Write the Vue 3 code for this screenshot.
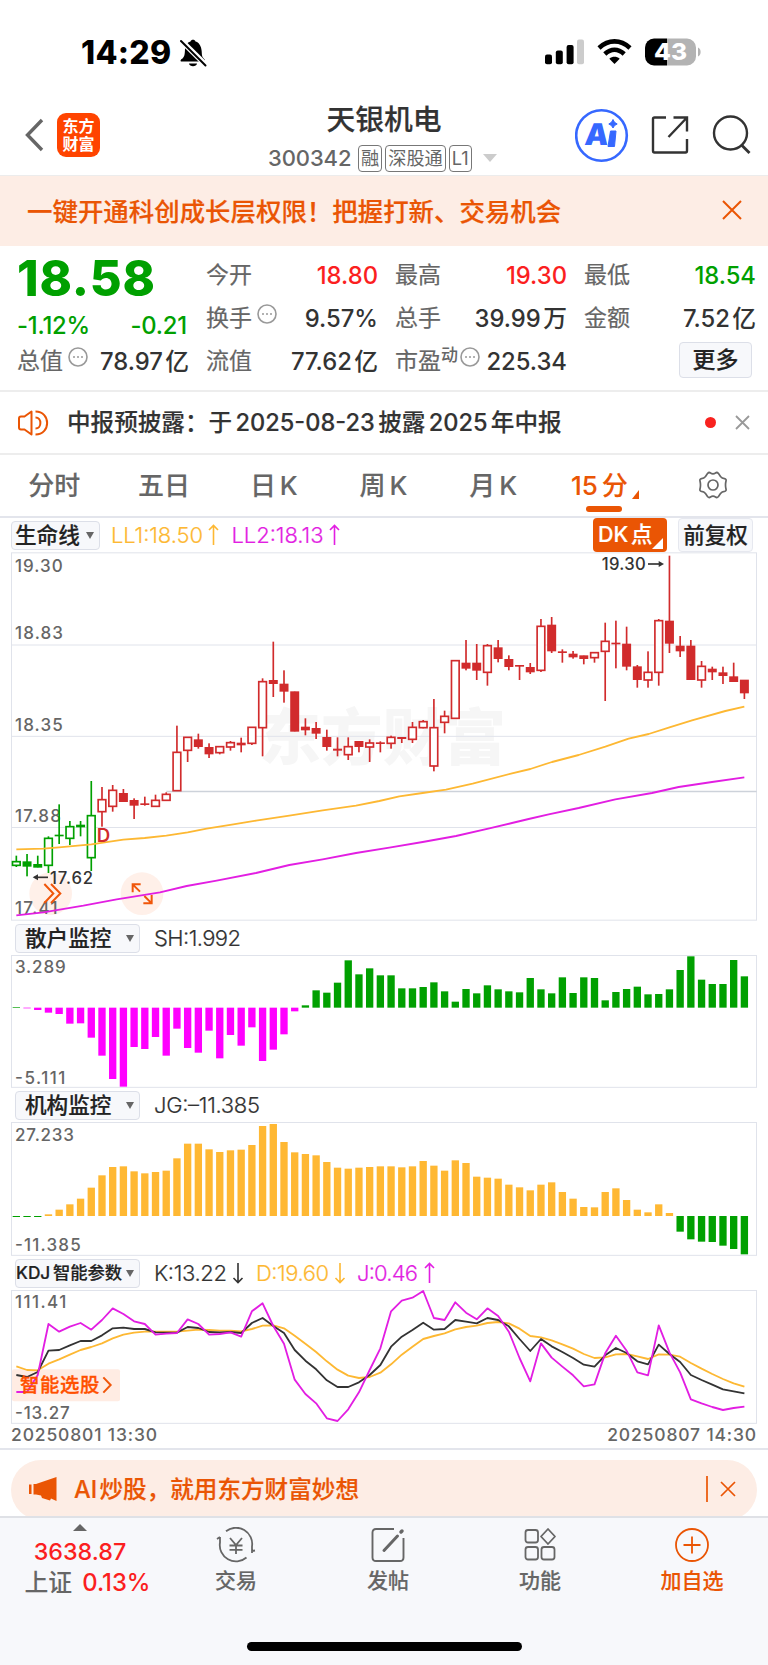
<script setup>
import { ref } from 'vue'

const STEP = 32.12
const x = (i) => 49 + i * STEP

const tabs = ref([
  { name: '分时' },
  { name: '五日' },
  { name: '日 K' },
  { name: '周 K' },
  { name: '月 K' },
  { name: '15 分', active: true }
])

const stats = [
  [
    { label: '今开', value: '18.80', cls: 'up' },
    { label: '换手', tip: true, value: '9.57%' },
    { label: '流值', value: '77.62 亿' }
  ],
  [
    { label: '最高', value: '19.30', cls: 'up' },
    { label: '总手', value: '39.99 万' },
    { label: '市盈', sup: '动', tip: true, value: '225.34' }
  ],
  [
    { label: '最低', value: '18.54', cls: 'down' },
    { label: '金额', value: '7.52 亿' }
  ]
]

// high, body top, body bottom, low, hollow
const candles = [
  [1022, 1040, 1051, 1056, 1], [1017, 1040, 1054, 1084, 0], [1022, 1048, 1057, 1057, 0], [964, 970, 1051, 1074, 1],
  [868, 960, 963, 987, 0], [918, 935, 970, 990, 1], [918, 930, 936, 964, 0], [798, 902, 1028, 1068, 1],
  [816, 854, 890, 935, 1], [810, 826, 874, 890, 1], [822, 835, 860, 860, 0], [850, 856, 871, 912, 0],
  [845, 866, 869, 872, 0], [839, 856, 874, 874, 1], [832, 838, 856, 858, 1], [632, 712, 827, 828, 1],
  [667, 667, 706, 741, 1], [656, 674, 695, 701, 0], [685, 697, 717, 729, 0], [695, 695, 713, 718, 1],
  [678, 683, 696, 707, 1], [668, 684, 690, 712, 0], [637, 637, 685, 690, 1], [490, 500, 638, 724, 1],
  [380, 496, 506, 546, 0], [466, 507, 529, 563, 0], [530, 530, 649, 649, 0], [610, 636, 645, 661, 0],
  [621, 640, 655, 672, 0], [644, 667, 695, 707, 0], [667, 702, 706, 724, 0], [667, 695, 719, 735, 1],
  [678, 679, 695, 712, 0], [673, 684, 696, 741, 1], [679, 683, 686, 712, 0], [662, 667, 685, 701, 1],
  [667, 667, 671, 684, 0], [621, 637, 673, 684, 1], [615, 620, 638, 640, 1], [552, 638, 753, 769, 1],
  [587, 604, 622, 655, 1], [437, 437, 610, 610, 1], [375, 444, 460, 466, 0], [387, 444, 466, 495, 0],
  [387, 392, 472, 512, 1], [375, 398, 431, 442, 0], [421, 433, 455, 466, 0], [451, 451, 454, 495, 0],
  [444, 457, 471, 477, 0], [312, 334, 466, 471, 1], [306, 330, 408, 414, 0], [403, 410, 413, 443, 0],
  [408, 417, 426, 431, 0], [422, 422, 431, 448, 0], [413, 413, 428, 443, 1], [323, 379, 409, 558, 1],
  [317, 384, 387, 460, 0], [335, 387, 454, 466, 0], [450, 455, 494, 518, 0], [409, 472, 495, 518, 1],
  [312, 317, 472, 512, 1], [122, 318, 385, 414, 0], [363, 393, 408, 426, 0], [375, 393, 494, 494, 0],
  [438, 454, 495, 518, 1], [455, 462, 471, 495, 0], [455, 473, 482, 507, 0], [443, 485, 500, 500, 0],
  [495, 495, 534, 552, 0]
]

const ll1 = '49,1003 130,1001 177,997 274,988 370,974 434,969 499,962 563,952 620,941 700,928 768,917 868,902 968,886 1068,872 1138,858 1198,844 1268,834 1338,824 1418,806 1536,775 1591,762 1656,741 1736,720 1816,695 1886,671 1946,657 2006,638 2076,616 2176,588 2233,575'
const ll2 = '49,1201 130,1192 250,1172 350,1153 480,1132 560,1113 650,1097 768,1074 868,1050 968,1033 1068,1014 1168,998 1268,981 1368,963 1468,940 1536,924 1586,912 1646,898 1736,879 1846,853 1956,834 2036,816 2136,801 2233,787'

const retailZero = 263
const retail = [
  261, 265, 270, 278, 282, 311, 310, 353, 407, 477, 500, 381, 387, 351, 407, 326, 384, 398, 332, 415, 345, 377, 322,
  423, 389, 343, 274, 256, 211, 218, 188, 121, 163, 145, 166, 166, 205, 205, 201, 187, 214, 245, 207, 220, 196, 208,
  214, 217, 174, 208, 220, 172, 219, 172, 174, 241, 216, 207, 200, 223, 222, 208, 150, 109, 179, 192, 192, 120, 169
]

const instZero = 888
const inst = [
  891, 891, 891, 883, 869, 853, 836, 803, 766, 741, 739, 754, 760, 756, 752, 715, 671, 671, 688, 696, 691, 689, 675,
  618, 612, 666, 697, 702, 706, 726, 743, 746, 743, 741, 739, 739, 742, 739, 723, 737, 752, 721, 729, 770, 773, 776,
  794, 802, 811, 794, 787, 816, 836, 861, 862, 816, 805, 840, 869, 877, 853, 879, 935, 958, 965, 966, 977, 987, 1003
]

const k = [
  375, 381, 366, 302, 300, 286, 273, 273, 256, 235, 233, 237, 237, 247, 248, 248, 231, 234, 246, 247, 246, 249, 219,
  204, 228, 249, 300, 332, 358, 391, 411, 411, 397, 375, 345, 290, 260, 240, 218, 239, 237, 210, 215, 220, 204, 210,
  229, 267, 303, 267, 289, 306, 324, 344, 350, 316, 294, 309, 334, 343, 284, 312, 336, 375, 390, 404, 418, 424, 430
]
const d = [
  349, 360, 361, 341, 328, 314, 300, 291, 280, 265, 254, 248, 245, 245, 245, 245, 242, 239, 240, 242, 242, 244, 237,
  227, 226, 235, 257, 281, 306, 334, 359, 377, 384, 381, 368, 343, 314, 290, 267, 258, 250, 238, 231, 227, 219, 216,
  220, 236, 258, 262, 271, 283, 296, 312, 324, 322, 313, 312, 319, 327, 313, 314, 320, 339, 356, 372, 387, 400, 410
]
const j = [
  426, 426, 375, 222, 245, 230, 219, 239, 210, 175, 192, 214, 222, 254, 251, 249, 208, 222, 254, 252, 247, 260, 184,
  160, 228, 281, 389, 432, 460, 505, 513, 478, 427, 360, 295, 184, 152, 143, 123, 204, 210, 157, 188, 208, 175, 198,
  245, 324, 394, 280, 323, 350, 376, 409, 403, 310, 257, 302, 367, 376, 226, 307, 367, 448, 460, 471, 480, 474, 470
]
const line = (arr) => arr.map((v, i) => `${x(i).toFixed(1)},${v}`).join(' ')
</script>

<template>
  <main class="app">
    <div class="status">
      <span class="time">14:29</span>
      <svg class="bell" width="28" height="30" viewBox="0 0 28 30">
        <path d="M3.5 20.5C1.5 21.5 1 23 2 23.5H25.5C26.5 23 26 21.5 24.5 20.3C22 17.5 23.5 15 22 9.500C21 6 18.500 3.800 16.500 3.500C16 1 12 1 11.500 3.500C8 4.500 6.200 7.500 6 11C5.800 15 6 18 3.500 20.500Z" />
        <path d="M10 25.500H18C17.500 29 10.500 29 10 25.500Z" />
        <path d="M1 1.500L27 27" stroke="#fff" stroke-width="5.500" />
        <path d="M2 3L26.500 27.500" stroke="#000" stroke-width="2" stroke-linecap="round" />
      </svg>
      <svg class="signal" width="160" height="30" viewBox="0 0 160 30">
        <rect x="0" y="16.500" width="7" height="9.800" rx="2" />
        <rect x="10.800" y="12.500" width="7" height="13.800" rx="2" />
        <rect x="21.600" y="7" width="7" height="19.300" rx="2" />
        <rect x="32" y="1.500" width="7" height="24.800" rx="2" fill="#ccc" />
        <g fill="none" stroke="#000" stroke-width="4.600">
          <path d="M54 10C63.500 1.200 75.500 1.200 85 10" />
          <path d="M59.800 16C66 10.300 73 10.300 79.200 16" />
        </g>
        <path d="M69.500 26L64.300 20.800C67.500 18.200 71.500 18.200 74.700 20.800Z" />
        <path d="M109 .5H122V27.500H109A9 9 0 0 1 100 18.500V9.500A9 9 0 0 1 109 .5Z" />
        <path d="M122 .5H142A9 9 0 0 1 151 9.500V18.500A9 9 0 0 1 142 27.500H122Z" fill="#b3b3b3" />
        <path d="M153 9.500C156.500 11 156.500 17 153 18.500Z" fill="#b3b3b3" />
        <text x="109" y="22.300" class="battery" textLength="33" lengthAdjust="spacingAndGlyphs">43</text>
      </svg>
    </div>

    <header class="header">
      <div class="left">
        <svg width="20" height="34" viewBox="0 0 20 34"><path d="M17 2L2.500 17L17 32" fill="none" stroke="#666" stroke-width="3.400" /></svg>
        <div class="logo"><span>东方</span><span>财富</span></div>
      </div>
      <div class="name">
        <h1>天银机电</h1>
        <p>
          <span class="code">300342</span><i>融</i><i>深股通</i><i>L1</i>
          <svg width="14" height="8" viewBox="0 0 14 8"><path d="M0 0H14L7 8Z" fill="#ccc" /></svg>
        </p>
      </div>
      <svg class="tools" width="178" height="56" viewBox="0 0 178 56">
        <circle cx="26.500" cy="28.500" r="25.300" fill="#fff" stroke="#3668ff" stroke-width="2.600" />
        <g fill="#3668ff">
          <text transform="translate(9 38) skewX(-5)" class="ai">A</text>
          <path d="M35.500 24H41L39.500 39.500H33Z" stroke="#3668ff" stroke-linejoin="round" />
          <path d="M38 12.500Q39 16 42.200 17Q39 18 38 21Q37 18 33.800 17Q37 16 38 12.500Z" stroke="#3668ff" />
        </g>
        <g fill="none" stroke="#333" stroke-width="2.400">
          <path d="M91 10.500H79.500Q78 10.500 78 12V43.500Q78 45.500 79.500 45.500H110.500Q112 45.500 112 43.500V32" />
          <path d="M98.500 10.500H112V24.500M112 10.500L93.500 30" />
          <circle cx="155.500" cy="26" r="16.500" />
          <path d="M166.500 38L174.500 46" stroke-width="2.800" />
        </g>
      </svg>
    </header>

    <div class="promo">
      <span>一键开通科创成长层权限！把握打新、交易机会</span>
      <svg width="20" height="20" viewBox="0 0 20 20"><path d="M1 1L19 19M19 1L1 19" stroke="#ea5504" stroke-width="2" /></svg>
    </div>

    <section class="quote">
      <div class="col first">
        <b class="price">18.58</b>
        <div class="change down"><span>-1.12%</span><span>-0.21</span></div>
        <div class="item">
          <label>总值</label>
          <svg class="tip" width="20" height="20" viewBox="0 0 20 20"><circle cx="10" cy="10" r="9" /><path d="M5 10H7M9 10H11M13 10H15" /></svg>
          <span>78.97 亿</span>
        </div>
      </div>
      <div class="col" v-for="(col, c) in stats" :key="c">
        <div class="item" v-for="s in col" :key="s.label">
          <label>{{ s.label }}</label>
          <sup v-if="s.sup">{{ s.sup }}</sup>
          <svg v-if="s.tip" class="tip" :class="{ near: s.sup }" width="20" height="20" viewBox="0 0 20 20"><circle cx="10" cy="10" r="9" /><path d="M5 10H7M9 10H11M13 10H15" /></svg>
          <span :class="s.cls">{{ s.value }}</span>
        </div>
        <button v-if="c === 2" class="more">更多</button>
      </div>
    </section>

    <div class="notice">
      <svg width="31" height="28" viewBox="0 0 31 28" fill="none" stroke="#ea5504" stroke-width="2">
        <path d="M13.500 2.500V25.500L6.500 20.500H3Q1 20.500 1 18.500V9.500Q1 7.500 3 7.500H6.500Z" stroke-linejoin="round" />
        <path d="M17.500 8.500C24 8.500 24 19.500 17.500 19.500M17.500 2.500C33 2.500 33 25.500 17.500 25.500" />
      </svg>
      <span class="text">中报预披露：于 2025-08-23 披露 2025 年中报</span>
      <span class="dot"></span>
      <svg width="15" height="15" viewBox="0 0 15 15"><path d="M1 1L14 14M14 1L1 14" stroke="#999" stroke-width="1.800" /></svg>
    </div>

    <nav class="tabs">
      <a v-for="t in tabs" :key="t.name" :class="{ active: t.active }">{{ t.name }}<svg v-if="t.active" width="7" height="9" viewBox="0 0 7 9"><path d="M7 0V9H0Z" fill="#ea5504" /></svg></a>
      <a class="gear">
        <svg width="30" height="28" viewBox="0 0 30 28" fill="none" stroke="#666" stroke-width="1.700">
          <path d="M9.500 2.500Q11 .8 12.500 2Q15 3.600 17.500 2Q19 .8 20.500 2.500L22.500 5.500Q24 7.500 26.500 7.600Q28.500 8 28 10Q27 14 28 18Q28.500 20 26.500 20.400Q24 20.500 22.500 22.500L20.500 25.500Q19 27.200 17.500 26Q15 24.400 12.500 26Q11 27.200 9.500 25.500L7.500 22.500Q6 20.500 3.500 20.400Q1.500 20 2 18Q3 14 2 10Q1.500 8 3.500 7.600Q6 7.500 7.500 5.500Z" />
          <circle cx="15" cy="14" r="5" />
        </svg>
      </a>
    </nav>

    <section class="charts">
      <div class="bar main-bar">
        <button class="pick small">生命线<u></u></button>
        <svg class="legend" width="340" height="30" viewBox="0 0 340 30">
          <g fill="#fdb833" stroke="#fdb833"><text x="1" y="23" textLength="92">LL1:18.50</text><path d="M103.500 25V5.500M99 10L103.500 5.500L108 10" /></g>
          <g fill="#e21ee2" stroke="#e21ee2"><text x="121.500" y="23" textLength="92">LL2:18.13</text><path d="M224.500 25V5.500M220 10L224.500 5.500L229 10" /></g>
        </svg>
        <span class="dk">DK 点<svg width="11" height="11" viewBox="0 0 11 11"><path d="M11 0V11H0Z" fill="#fff" /></svg></span>
        <span class="fq">前复权</span>
      </div>
      <svg class="chart" width="747" height="369" viewBox="33 111 2241 1107">
        <text x="1148" y="736" class="watermark" textLength="740">东方财富</text>
        <g class="grid">
          <rect x="34.500" y="113.500" width="2235" height="1102" />
          <path d="M34 390H2270M34 664H2270M34 937.500H2270" />
          <path d="M499 829.500H2270" class="strong" />
        </g>
        <circle cx="152" cy="1136" r="64" class="float" />
        <circle cx="426" cy="1136" r="64" class="float" />
        <g class="axis">
          <text x="45" y="172" textLength="143">19.30</text>
          <text x="45" y="372" textLength="144">18.83</text>
          <text x="45" y="648" textLength="143">18.35</text>
          <text x="45" y="922" textLength="138">17.88</text>
          <text x="45" y="1198" textLength="128">17.41</text>
        </g>
        <g v-for="(c, i) in candles" :key="i" :class="['candle', i < 8 ? 'green' : 'red', { hollow: c[4] }]">
          <rect class="wick" :x="x(i) - 2.500" :y="c[0]" width="5" :height="c[3] - c[0]" />
          <rect v-if="c[4]" class="body" :x="x(i) - 11.500" :y="c[1]" width="23" :height="c[2] - c[1]" />
          <rect v-else class="body" :x="x(i) - 13.500" :y="c[1] - 1" width="27" :height="c[2] - c[1] + 2" />
        </g>
        <polyline :points="ll1" class="orange" />
        <polyline :points="ll2" class="pink" />
        <text x="290" y="981" class="mark">D</text>
        <g class="note">
          <text x="150" y="1107" textLength="129">17.62</text>
          <path d="M104 1087H144" /><path d="M98 1087L114 1078V1096Z" class="tipfill" />
          <text x="1805" y="166" textLength="132">19.30</text>
          <path d="M1944 147H1984" /><path d="M1992 147L1976 138V156Z" class="tipfill" />
        </g>
        <g class="floaticon">
          <path d="M133 1107L160 1135.500L133 1164M153 1107L181 1135.500L153 1164" />
          <path d="M398 1132V1108H422M398 1108L420 1130M455 1140V1165H430M455 1165L433 1143" />
        </g>
      </svg>

      <div class="bar">
        <button class="pick">散户监控<u></u></button>
        <svg class="legend" width="340" height="30" viewBox="0 0 340 30"><text x="0" y="23" textLength="87" fill="#333" stroke="#333">SH:1.992</text></svg>
      </div>
      <svg class="chart" width="747" height="133" viewBox="33 105 2241 399">
        <g class="grid"><rect x="34.500" y="106.500" width="2235" height="395.500" /></g>
        <g class="axis">
          <text x="45" y="159" textLength="152">3.289</text>
          <text x="45" y="491" textLength="151">-5.111</text>
        </g>
        <rect v-for="(v, i) in retail" :key="i" :x="x(i) - 11" :y="Math.min(v, retailZero)" width="22" :height="Math.abs(v - retailZero)" :fill="v > retailZero ? '#f0f' : '#00a000'" />
      </svg>

      <div class="bar">
        <button class="pick">机构监控<u></u></button>
        <svg class="legend" width="340" height="30" viewBox="0 0 340 30"><text x="0" y="23" textLength="106" fill="#333" stroke="#333">JG:–11.385</text></svg>
      </div>
      <svg class="chart" width="747" height="134" viewBox="33 606 2241 402">
        <g class="grid"><rect x="34.500" y="607.500" width="2235" height="398.500" /></g>
        <g class="axis">
          <text x="45" y="662" textLength="177">27.233</text>
          <text x="45" y="994" textLength="197">-11.385</text>
        </g>
        <rect v-for="(v, i) in inst" :key="i" :x="x(i) - 11" :y="Math.min(v, instZero)" width="22" :height="Math.abs(v - instZero)" :fill="v > instZero ? '#00a000' : '#ffb833'" />
      </svg>

      <div class="bar">
        <button class="pick kdj">KDJ 智能参数<u></u></button>
        <svg class="legend" width="340" height="30" viewBox="0 0 340 30">
          <g fill="#333" stroke="#333"><text x="0" y="23" textLength="73">K:13.22</text><path d="M84 5V24.500M79.500 20L84 24.500L88.500 20" /></g>
          <g fill="#fdb833" stroke="#fdb833"><text x="102" y="23" textLength="73">D:19.60</text><path d="M186 5V24.500M181.500 20L186 24.500L190.500 20" /></g>
          <g fill="#e21ee2" stroke="#e21ee2"><text x="203" y="23" textLength="61">J:0.46</text><path d="M275.500 25V5.500M271 10L275.500 5.500L280 10" /></g>
        </svg>
      </div>
      <svg class="chart" width="747" height="134" viewBox="33 120 2241 402">
        <rect x="36" y="358" width="324" height="96" rx="6" class="float box" />
        <g class="grid"><rect x="34.500" y="121.500" width="2235" height="398.500" /></g>
        <g class="axis">
          <text x="45" y="175" textLength="154">111.41</text>
          <text x="45" y="507" textLength="164">-13.27</text>
        </g>
        <polyline :points="line(d)" class="orange" />
        <polyline :points="line(k)" class="black" />
        <polyline :points="line(j)" class="pink" />
        <text x="60" y="426" class="smart" textLength="238">智能选股</text>
        <path d="M310 382L332 405L310 428" class="smartarrow" />
      </svg>
      <div class="dates"><span>20250801 13:30</span><span>20250807 14:30</span></div>
    </section>

    <div class="assist">
      <div class="pill">
        <svg width="28" height="26" viewBox="0 0 28 26" fill="#ea5504"><path d="M0 8.500H2.500V18H0ZM4.500 8H7L27.500 1V25L22 22.500L21 24.500L13 22L12 19.500L7 18.500H4.500Z" /></svg>
        <span>AI 炒股，就用东方财富妙想</span>
        <svg width="30" height="28" viewBox="0 0 30 28" stroke="#ea5504" stroke-width="1.700"><path d="M1 1V27M15 7L29 21M29 7L15 21" /></svg>
      </div>
    </div>

    <footer class="footer">
      <div class="index">
        <svg width="14" height="7" viewBox="0 0 14 7"><path d="M7 0L14 7H0Z" fill="#666" /></svg>
        <b>3638.87</b>
        <p>上证<em>0.13%</em></p>
      </div>
      <div class="entry">
        <svg width="40" height="36" viewBox="0 0 40 36" fill="none" stroke="#666" stroke-width="1.800">
          <path d="M10 4.200A16.200 16.200 0 0 1 36 19.500V26M36 24L39 23.500M30.500 30.500A16.200 16.200 0 0 1 4 15.500V10M4 10L1 12" />
          <path d="M14 11L20 18L26 11M20 18V27M13.500 18.500H26.500M13.500 22.800H26.500" />
        </svg>
        <span>交易</span>
      </div>
      <div class="entry">
        <svg width="36" height="36" viewBox="0 0 36 36" fill="none" stroke="#666" stroke-width="1.900">
          <path d="M24 2H6Q2.500 2 2.500 5.500V30.500Q2.500 34 6 34H30Q33.500 34 33.500 30.500V11" />
          <path d="M14 23.500L27.500 9" stroke-width="3" stroke-linecap="round" /><path d="M31 5L32 4" stroke-width="3.500" stroke-linecap="round" />
        </svg>
        <span>发帖</span>
      </div>
      <div class="entry">
        <svg width="34" height="36" viewBox="0 0 34 36" fill="none" stroke="#666" stroke-width="1.800">
          <rect x="2.500" y="3" width="12.500" height="12.500" rx="2.500" /><rect x="2.500" y="20" width="12.500" height="12.500" rx="2.500" /><rect x="18.500" y="20" width="13" height="12.500" rx="2.500" />
          <path d="M25 2L32 9.500L25 17L18 9.500Z" stroke-linejoin="round" />
        </svg>
        <span>功能</span>
      </div>
      <div class="entry hot">
        <svg width="36" height="36" viewBox="0 0 36 36" fill="none" stroke="#ea5504" stroke-width="1.800"><circle cx="18" cy="18" r="16" /><path d="M18 9.500V26.500M9.500 18H26.500" /></svg>
        <span>加自选</span>
      </div>
      <div class="home"></div>
    </footer>
  </main>
</template>

<style>
body {
  background: #fff;
}
</style>

<style scoped>
* {
  box-sizing: border-box;
  margin: 0;
}
.app {
  width: 768px;
  height: 1665px;
  overflow: hidden;
  display: flex;
  flex-direction: column;
  background: #fff;
  color: #333;
  font-family: Inter, "Noto Sans CJK SC", sans-serif;
  font-weight: 500;
}
svg {
  display: block;
  flex: none;
}
.up {
  color: #fb1f1f;
}
.down {
  color: #00a000;
}
.status {
  height: 96px;
  padding: 38px 0 0 81px;
  display: flex;
  align-items: flex-start;
}
.time {
  width: 98px;
  font-size: 32px;
  line-height: 30px;
  font-weight: 800;
  letter-spacing: 0.3px;
  color: #000;
  white-space: nowrap;
}
.signal {
  margin-left: 338px;
}
.battery {
  font-size: 23px;
  font-weight: 800;
  fill: #fff;
}
.header {
  height: 80px;
  border-bottom: 1px solid #ececec;
  display: grid;
  grid-template-columns: 244px 280px 1fr;
}
.left {
  display: flex;
  align-items: center;
  gap: 12px;
  padding: 0 0 1px 25px;
}
.logo {
  width: 43px;
  height: 44px;
  border-radius: 9px;
  background: #ff4400;
  color: #fff;
  font-size: 16px;
  line-height: 18px;
  font-weight: 700;
  display: flex;
  flex-direction: column;
  align-items: center;
  justify-content: center;
}
.name {
  text-align: center;
  padding-top: 7px;
}
.name h1 {
  font-size: 28.800px;
  line-height: 34px;
  font-weight: 500;
  -webkit-text-stroke: 0.2px;
}
.name p {
  display: flex;
  align-items: center;
  justify-content: flex-start;
  padding-left: 24px;
  margin-top: 7px;
  height: 28px;
  color: #666;
}
.code {
  font-size: 22px;
  letter-spacing: -0.1px;
  width: 90px;
  text-align: left;
}
.name i {
  font-style: normal;
  font-weight: 400;
  font-size: 18.200px;
  line-height: 25px;
  height: 27px;
  border: 1px solid #777;
  border-radius: 4px;
  padding: 0 2px;
  margin-right: 3px;
}
.name p svg {
  margin-left: 8px;
}
.tools {
  margin: 11px 0 0 51px;
}
.ai {
  font-size: 30px;
  font-weight: 900;
}
.promo {
  height: 70px;
  background: #fdede5;
  color: #ea5504;
  font-size: 25.450px;
  -webkit-text-stroke: 0.2px;
  padding: 0 26px 4px 27px;
  display: flex;
  align-items: center;
  justify-content: space-between;
}
.promo svg {
  margin-top: 2px;
}
.quote {
  height: 146px;
  border-bottom: 2px solid #ededed;
  display: grid;
  grid-template-columns: 172px 172px 172px 172px;
  column-gap: 17px;
  padding: 8px 0 0 17px;
}
.col {
  display: flex;
  flex-direction: column;
}
.price {
  display: block;
  height: 49px;
  line-height: 50px;
  font-size: 49px;
  font-weight: 800;
  letter-spacing: 0.8px;
  color: #00a000;
}
.change {
  display: flex;
  justify-content: space-between;
  height: 37px;
  line-height: 45px;
  font-size: 23.800px;
  letter-spacing: -0.2px;
  padding-right: 2px;
}
.item {
  display: flex;
  align-items: center;
  height: 43px;
  font-size: 23.800px;
  line-height: 43px;
  white-space: nowrap;
}
.item label {
  color: #666;
  font-weight: 400;
  font-size: 23px;
  -webkit-text-stroke: 0.2px;
}
.item span {
  margin-left: auto;
  word-spacing: -4px;
  letter-spacing: 0;
}
.item sup {
  font-size: 17px;
  line-height: 20px;
  margin-top: -14px;
  color: #666;
}
.tip {
  margin: -9px 0 0 5px;
  fill: none;
  stroke: #999;
  stroke-width: 1.600;
}
.tip.near {
  margin-left: 2px;
}
.more {
  align-self: flex-end;
  width: 73px;
  height: 36px;
  margin: 2px 4px 0 0;
  border: 1px solid #dcdfe8;
  border-radius: 4px;
  background: #f7f8fb;
  color: #222;
  padding: 0;
  font: 500 23px/32px Inter, "Noto Sans CJK SC", sans-serif;
  -webkit-text-stroke: 0.2px;
}
.notice {
  height: 63px;
  border-bottom: 2px solid #ededed;
  display: flex;
  align-items: center;
  padding: 0 18px 0 18px;
}
.notice .text {
  margin: -3px 0 0 18px;
  font-size: 23.600px;
  -webkit-text-stroke: 0.150px;
  word-spacing: -3px;
  white-space: nowrap;
}
.dot {
  width: 11px;
  height: 11px;
  border-radius: 50%;
  background: #f8221f;
  margin: 0 19px 0 auto;
}
.tabs {
  height: 63px;
  border-bottom: 2px solid #e3e5ec;
  display: grid;
  grid-template-columns: repeat(7, 1fr);
}
.tabs a {
  position: relative;
  display: flex;
  align-items: center;
  justify-content: center;
  font-size: 26px;
  color: #666;
  white-space: nowrap;
  word-spacing: -3px;
  padding: 0 1px 5px 0;
  -webkit-text-stroke: 0.100px;
}
.tabs .gear {
  padding: 0 0 2px 0;
}
.tabs .active {
  color: #ea5504;
  padding-right: 10px;
}
.tabs .active svg {
  margin: 22px -13px 0 4px;
}
.tabs .active::after {
  content: "";
  position: absolute;
  left: 37px;
  bottom: 4px;
  width: 36px;
  height: 6px;
  border-radius: 3px;
  background: #ea5504;
}
.charts {
  height: 932px;
  border-bottom: 2px solid #e3e5ec;
}
.bar {
  height: 34px;
  display: flex;
  align-items: center;
  padding-left: 15px;
}
.main-bar {
  padding-left: 11px;
}
.pick {
  width: 125px;
  height: 29px;
  border: 1px solid #dcdfe8;
  border-radius: 4px;
  background: #f7f8fb;
  color: #222;
  display: flex;
  align-items: center;
  justify-content: space-between;
  padding: 0 5px 0 9px;
  font: 500 21.600px/26px Inter, "Noto Sans CJK SC", sans-serif;
  -webkit-text-stroke: 0.2px;
  white-space: nowrap;
}
.pick.small {
  width: 89px;
  padding-left: 3px;
}
.pick.kdj {
  padding-left: 0;
  font-size: 17.300px;
  word-spacing: -2px;
}
.pick u {
  border: 4.500px solid transparent;
  border-top: 7px solid #666;
  border-bottom: 0;
}
.legend {
  margin-left: 14px;
}
.main-bar .legend {
  margin-left: 10px;
}
.legend text {
  font-size: 22px;
  font-weight: 300;
  stroke-width: 0.2;
}
.legend path {
  fill: none;
  stroke-width: 1.600;
}
.dk,
.fq {
  flex: none;
  height: 34px;
  line-height: 33px;
  border-radius: 4px;
  font-size: 21.500px;
  -webkit-text-stroke: 0.2px;
}
.dk {
  position: relative;
  width: 74px;
  margin-left: 143px;
  padding-left: 5px;
  background: #ea5504;
  color: #fff;
  word-spacing: -3px;
}
.dk svg {
  position: absolute;
  right: 4px;
  bottom: 3px;
}
.fq {
  width: 75px;
  margin-left: 11px;
  text-align: center;
  border: 1px solid #e6e8ef;
  background: #f7f8fb;
  color: #222;
}
.chart {
  margin-left: 11px;
}
.grid * {
  fill: none;
  stroke: #e0e3eb;
  stroke-width: 3;
}
.grid .strong {
  stroke: #cdd2da;
  stroke-width: 5;
}
.axis text {
  font-size: 51px;
  font-weight: 500;
  fill: #666;
}
.watermark {
  font-size: 185px;
  font-weight: 900;
  fill: #f6f6f6;
  text-anchor: middle;
}
.green rect {
  fill: #00a000;
}
.red rect {
  fill: #d12b2c;
}
.hollow .body {
  fill: #fff;
  stroke-width: 5;
}
.green.hollow .body {
  stroke: #00a000;
}
.red.hollow .body {
  stroke: #d12b2c;
}
polyline {
  fill: none;
  stroke-width: 5.500;
  stroke-linejoin: round;
}
.orange {
  stroke: #fdb833;
}
.pink {
  stroke: #e21ee2;
}
.black {
  stroke: #333;
}
.mark {
  font-size: 56px;
  font-weight: 600;
  fill: #d12b2c;
}
.note text {
  font-size: 50px;
  fill: #333;
}
.note path {
  stroke: #333;
  stroke-width: 5;
}
.note .tipfill {
  fill: #333;
  stroke: none;
}
.float {
  fill: #fff0e9;
}
.float.box {
  fill: #ffece3;
}
.floaticon path,
.smartarrow {
  fill: none;
  stroke: #f0560a;
  stroke-width: 6;
}
.smart {
  font-size: 58px;
  fill: #ff5000;
  stroke: #ff5000;
  stroke-width: 1;
}
.dates {
  display: flex;
  justify-content: space-between;
  padding: 0 11px 0 11px;
  font-size: 17.500px;
  line-height: 22px;
  letter-spacing: 0.850px;
  color: #666;
}
.assist {
  height: 66px;
  padding: 10px 11px 0;
  overflow: hidden;
}
.pill {
  height: 60px;
  border-radius: 30px;
  background: #fdede5;
  color: #ea5504;
  display: flex;
  align-items: center;
  padding: 0 21px 2px 18px;
  font-size: 23.600px;
  -webkit-text-stroke: 0.2px;
}
.pill span {
  margin: -2px auto 0 17px;
  word-spacing: -4px;
}
.footer {
  flex: 1;
  border-top: 2px solid #dfe1e6;
  background: #f7f8fb;
  display: grid;
  grid-template-columns: 160px repeat(4, 152px);
  grid-template-rows: 124px auto;
}
.index {
  display: flex;
  flex-direction: column;
  align-items: center;
  padding-top: 6px;
}
.index b {
  margin-top: 6px;
  font-size: 23.300px;
  line-height: 30px;
  font-weight: 500;
  color: #fb1f1f;
}
.index p {
  font-size: 23.800px;
  line-height: 32px;
  color: #666;
  padding-left: 15px;
  white-space: nowrap;
}
.index em {
  font-style: normal;
  color: #fb1f1f;
  margin-left: 10px;
}
.entry {
  display: flex;
  flex-direction: column;
  align-items: center;
  padding: 9px 0 0 0;
  color: #666;
  font-size: 21px;
  -webkit-text-stroke: 0.150px;
}
.entry span {
  line-height: 36px;
}
.hot {
  color: #ea5504;
}
.home {
  grid-column: 1 / -1;
  justify-self: center;
  width: 275px;
  height: 9px;
  border-radius: 5px;
  background: #000;
}
</style>
